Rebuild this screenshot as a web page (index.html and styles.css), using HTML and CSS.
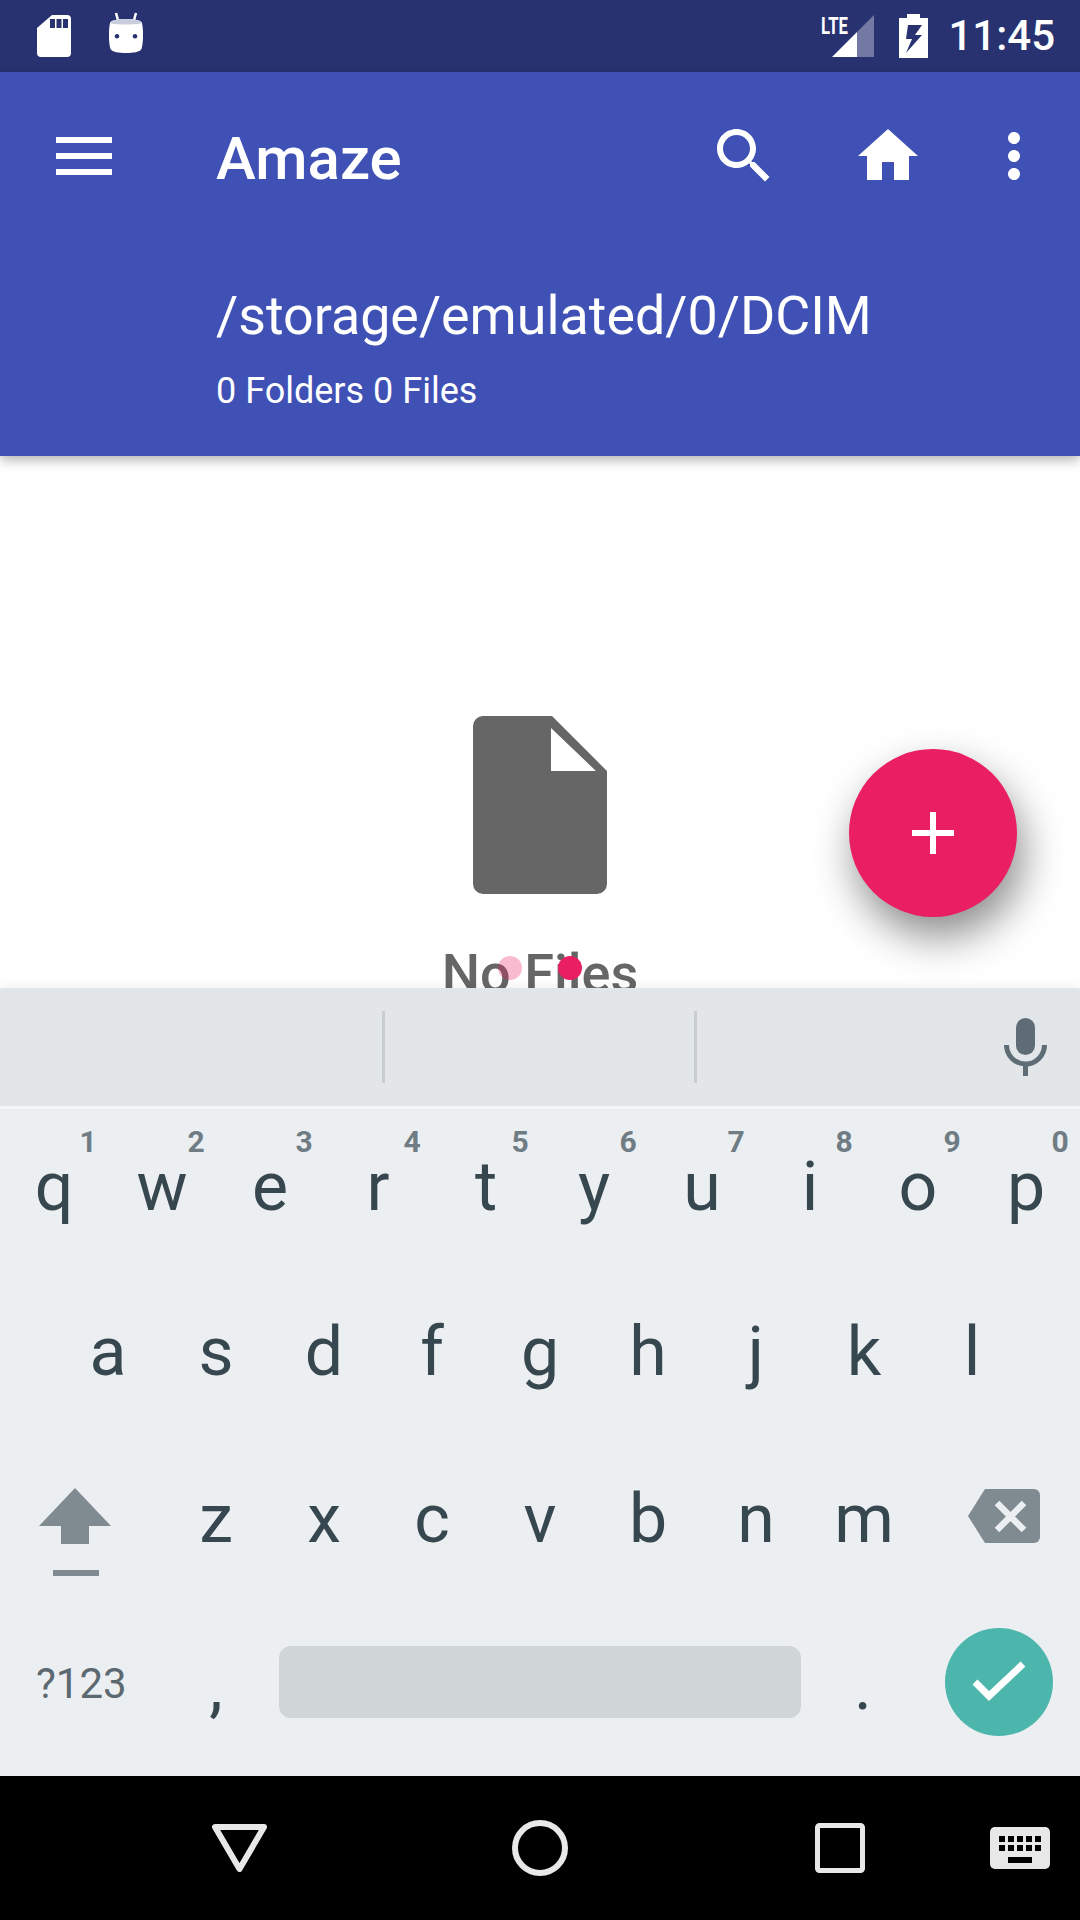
FILE: index.html
```html
<!DOCTYPE html>
<html lang="en">

<head>
  <meta charset="UTF-8">
  <meta name="viewport" content="width=device-width, initial-scale=1.0">
  <title>Amaze</title>
  <link rel="stylesheet" href="styles.css">
</head>

<body>
  <!-- Status bar -->
  <div class="status-bar">
    <svg class="icon-sd" width="34" height="42" viewBox="0 0 34 42">
      <path fill-rule="evenodd" fill="#fff" d="M15 0H30a4 4 0 0 1 4 4V38a4 4 0 0 1-4 4H4a4 4 0 0 1-4-4V13ZM13 4V13H18V4ZM19.500 4V13H24.500V4ZM26 4V13H31V4Z" />
    </svg>
    <svg class="icon-bot" width="34" height="42" viewBox="0 0 34 42">
      <path stroke="#fff" stroke-width="2.500" d="M7 1 9.500 10M27 1 24.500 10" />
      <path fill-rule="evenodd" fill="#fff" d="M17 7C25 7 32 8 33 11 34.500 18 34.500 30 32.500 37 31 40 24 41 17 41 10 41 3 40 1.500 37-.5 30-.5 18 1 11 2 8 9 7 17 7ZM8 22a2.300 2.300 0 1 0 .01 0ZM26 22a2.300 2.300 0 1 0 .01 0Z" />
      <path fill="#c9cede" d="M17 7C25 7 32 8 33 11 28 13 6 13 1 11 2 8 9 7 17 7Z" />
    </svg>
    <div class="status-right">
      <svg class="icon-signal" width="53" height="42" viewBox="0 0 53 42">
        <path fill="#fff" fill-opacity=".35" d="M53 0V42H36V17Z" />
        <path fill="#fff" d="M36 17V42H11Z" />
        <text class="lte" x="0" y="19" textLength="27" lengthAdjust="spacingAndGlyphs">LTE</text>
      </svg>
      <svg class="icon-battery" width="29" height="44" viewBox="0 0 29 44">
        <path fill-rule="evenodd" fill="#fff" d="M8 0H21V4H29V44H0V4H8ZM9 11H23L16 21H23L7 39 13 25H7Z" />
      </svg>
      <span class="clock">11:45</span>
    </div>
  </div>

  <!-- Toolbar -->
  <div class="toolbar">
    <div class="toolbar-row">
      <svg class="icon-menu" width="56" height="38" viewBox="0 0 56 38">
        <path fill="#fff" d="M0 0H56V6H0ZM0 16H56V22H0ZM0 32H56V38H0Z" />
      </svg>
      <div class="title">Amaze</div>
      <svg class="action-search" width="72" height="72" viewBox="0 0 24 24">
        <path fill="#fff" d="M15.500 14h-.79l-.28-.27C15.410 12.590 16 11.110 16 9.500 16 5.910 13.090 3 9.500 3S3 5.910 3 9.500 5.910 16 9.500 16c1.610 0 3.090-.59 4.230-1.570l.27.28v.79l5 4.990L20.490 19l-4.990-5zm-6 0C7.010 14 5 11.990 5 9.500S7.010 5 9.500 5 14 7.010 14 9.500 11.990 14 9.500 14z" />
      </svg>
      <svg class="action-home" width="72" height="72" viewBox="0 0 24 24">
        <path fill="#fff" d="M10 20v-6h4v6h5v-8h3L12 3 2 12h3v8z" />
      </svg>
      <svg class="action-more" width="72" height="72" viewBox="0 0 24 24">
        <path fill="#fff" d="M12 8c1.100 0 2-.9 2-2s-.9-2-2-2-2 .9-2 2 .9 2 2 2zm0 2c-1.100 0-2 .9-2 2s.9 2 2 2 2-.9 2-2-.9-2-2-2zm0 6c-1.100 0-2 .9-2 2s.9 2 2 2 2-.9 2-2-.9-2-2-2z" />
      </svg>
    </div>
    <div class="path">/storage/emulated/0/DCIM</div>
    <div class="counts">0 Folders 0 Files</div>
  </div>

  <!-- Empty folder -->
  <div class="content">
    <svg class="empty-icon" width="134" height="178" viewBox="0 0 134 178">
      <path fill-rule="evenodd" fill="#666" d="M10 0H79L134 55V168a10 10 0 0 1-10 10H10A10 10 0 0 1 0 168V10A10 10 0 0 1 10 0ZM78 12V55H123Z" />
    </svg>
    <div class="empty-text">No Files</div>
    <div class="dot dot-pink"></div>
    <div class="dot dot-red"></div>
    <div class="fab">
      <svg width="42" height="42" viewBox="0 0 42 42">
        <path fill="#fff" d="M18 0H24V18H42V24H24V42H18V24H0V18H18Z" />
      </svg>
    </div>
  </div>

  <!-- Keyboard -->
  <div class="keyboard">
    <div class="suggestions">
      <div class="divider divider-1"></div>
      <div class="divider divider-2"></div>
      <svg class="icon-mic" width="44" height="58" viewBox="0 0 44 58">
        <rect x="12" y="0" width="19" height="37" rx="9.500" fill="#5e6c75" />
        <path d="M2.500 27a19 19 0 0 0 38 0" fill="none" stroke="#5e6c75" stroke-width="5" />
        <rect x="19" y="46" width="5" height="12" fill="#5e6c75" />
      </svg>
    </div>
    <div class="keys">
      <div class="row row-top">
        <div class="key">q<span class="hint">1</span></div>
        <div class="key">w<span class="hint">2</span></div>
        <div class="key">e<span class="hint">3</span></div>
        <div class="key">r<span class="hint">4</span></div>
        <div class="key">t<span class="hint">5</span></div>
        <div class="key">y<span class="hint">6</span></div>
        <div class="key">u<span class="hint">7</span></div>
        <div class="key">i<span class="hint">8</span></div>
        <div class="key">o<span class="hint">9</span></div>
        <div class="key">p<span class="hint">0</span></div>
      </div>
      <div class="row row-home">
        <div class="key">a</div>
        <div class="key">s</div>
        <div class="key">d</div>
        <div class="key">f</div>
        <div class="key">g</div>
        <div class="key">h</div>
        <div class="key">j</div>
        <div class="key">k</div>
        <div class="key">l</div>
      </div>
      <div class="row">
        <div class="key-wide key-shift">
          <svg width="72" height="88" viewBox="0 0 72 88">
            <path fill="#7f8b90" d="M36 0 72 38H50V56H22V38H0ZM14 82H60V88H14Z" />
          </svg>
        </div>
        <div class="key">z</div>
        <div class="key">x</div>
        <div class="key">c</div>
        <div class="key">v</div>
        <div class="key">b</div>
        <div class="key">n</div>
        <div class="key">m</div>
        <div class="key-wide key-delete">
          <svg width="72" height="54" viewBox="0 0 72 54">
            <path fill="#7f8b90" d="M17 0H66a6 6 0 0 1 6 6V48a6 6 0 0 1-6 6H17L0 27Z" />
            <path stroke="#eceff1" stroke-width="6.500" d="M29 14 56 41M56 14 29 41" />
          </svg>
        </div>
      </div>
      <div class="row row-bottom">
        <div class="key-wide key-sym">?123</div>
        <div class="key">,</div>
        <div class="space-bar"></div>
        <div class="key key-period">.</div>
        <div class="enter">
          <svg width="108" height="108" viewBox="0 0 108 108">
            <path fill="none" stroke="#fff" stroke-width="7" d="M30 54 44 68 78 36" />
          </svg>
        </div>
      </div>
    </div>
  </div>

  <!-- Navigation bar -->
  <div class="nav-bar">
    <svg class="nav-back" width="55" height="48" viewBox="0 0 55 48">
      <path fill="none" stroke="#e8e8e8" stroke-width="6" stroke-linejoin="round" d="M3 3H52L27.500 45Z" />
    </svg>
    <svg class="nav-home" width="56" height="56" viewBox="0 0 56 56">
      <circle cx="28" cy="28" r="25" fill="none" stroke="#e8e8e8" stroke-width="6" />
    </svg>
    <svg class="nav-recent" width="50" height="50" viewBox="0 0 50 50">
      <rect x="2.500" y="2.500" width="45" height="45" rx="2" fill="none" stroke="#e8e8e8" stroke-width="5" />
    </svg>
    <svg class="nav-keyboard" width="60" height="42" viewBox="0 0 60 42">
      <rect width="60" height="42" rx="5" fill="#e8e8e8" />
      <path fill="#000" d="M9 9h6v6H9zM18 9h6v6h-6zM27 9h6v6h-6zM36 9h6v6h-6zM45 9h6v6h-6zM9 18h6v6H9zM18 18h6v6h-6zM27 18h6v6h-6zM36 18h6v6h-6zM45 18h6v6h-6zM18 30h24v6H18z" />
    </svg>
  </div>
</body>

</html>
```

FILE: styles.css
```css
body {
  display: flex;
  flex-direction: column;
  width: 1080px;
  height: 1920px;
  margin: 0;
  overflow: hidden;
  background-color: #fff;
  font-family: Roboto, "Noto Sans", sans-serif;
}

svg {
  display: block;
  flex-shrink: 0;
}

/* Status bar */
.status-bar {
  display: flex;
  align-items: flex-start;
  box-sizing: border-box;
  height: 72px;
  padding-top: 15px;
  background-color: #283270;
}

.icon-sd {
  margin-left: 37px;
}

.icon-bot {
  margin-top: -3px;
  margin-left: 38px;
}

.status-right {
  display: flex;
  align-items: flex-start;
  margin-left: auto;
  margin-right: 25px;
}

.lte {
  font-size: 24px;
  font-weight: 700;
  fill: #fff;
}

.icon-battery {
  margin-top: -1px;
  margin-left: 25px;
}

.clock {
  margin-left: 20px;
  font-size: 42px;
  font-weight: 500;
  line-height: 42px;
  color: #fff;
}

/* Toolbar */
.toolbar {
  position: relative;
  z-index: 2;
  box-sizing: border-box;
  height: 384px;
  padding-top: 48px;
  background-color: #3f51b5;
  box-shadow: 0 4px 11px rgba(0, 0, 0, 0.3);
  color: #fff;
}

.toolbar-row {
  display: flex;
  align-items: center;
  height: 72px;
}

.icon-menu {
  margin-left: 56px;
}

.title {
  margin-top: 4px;
  margin-left: 104px;
  font-size: 60px;
  font-weight: 500;
}

.action-search {
  margin-left: auto;
}

.action-home {
  margin-left: 72px;
}

.action-more {
  margin-left: 54px;
  margin-right: 30px;
}

.path {
  margin-top: 92px;
  margin-left: 216px;
  font-size: 53.800px;
  line-height: 64px;
}

.counts {
  margin-top: 21px;
  margin-left: 216px;
  font-size: 36px;
  line-height: 44px;
}

/* Empty folder */
.content {
  position: relative;
  display: flex;
  flex: 1;
  flex-direction: column;
  align-items: center;
  padding-top: 260px;
  overflow: hidden;
}

.empty-text {
  margin-top: 48px;
  font-size: 54px;
  font-weight: 500;
  line-height: 64px;
  white-space: nowrap;
  color: #666;
}

.dot {
  position: absolute;
  top: 500px;
  width: 24px;
  height: 24px;
  border-radius: 50%;
}

.dot-pink {
  left: 498px;
  background-color: rgba(233, 30, 99, 0.3);
}

.dot-red {
  left: 558px;
  background-color: #e91e63;
}

.fab {
  position: absolute;
  top: 293px;
  left: 849px;
  display: flex;
  justify-content: center;
  align-items: center;
  width: 168px;
  height: 168px;
  border-radius: 50%;
  background-color: #e91e63;
  box-shadow: 6px 20px 42px rgba(0, 0, 0, 0.45);
}

/* Keyboard */
.keyboard {
  position: relative;
  z-index: 1;
  background-color: #eceff1;
  box-shadow: 0 -3px 10px rgba(0, 0, 0, 0.05);
}

.suggestions {
  display: flex;
  align-items: center;
  box-sizing: border-box;
  height: 118px;
  background-color: #e2e6e9;
}

.divider {
  width: 3px;
  height: 72px;
  background-color: #c8cdd0;
}

.divider-1 {
  margin-left: 382px;
}

.divider-2 {
  margin-left: 309px;
}

.icon-mic {
  margin-left: 307px;
}

.keys {
  box-sizing: border-box;
  height: 670px;
  border-top: 3px solid #f3f5f6;
}

.row {
  display: flex;
  height: 167px;
}

.row-bottom {
  height: 166px;
}

.row-top .key {
  padding-top: 2px;
}

.row-home {
  padding-left: 54px;
}

.key {
  position: relative;
  box-sizing: border-box;
  width: 108px;
  font-size: 68px;
  line-height: 153px;
  text-align: center;
  color: #37474f;
}

.hint {
  position: absolute;
  top: 18px;
  left: 76px;
  width: 24px;
  font-size: 30px;
  font-weight: 700;
  line-height: 30px;
  color: #6f7c84;
}

.key-wide {
  box-sizing: border-box;
  width: 162px;
}

.key-shift {
  padding-top: 45px;
  padding-left: 39px;
}

.key-delete {
  padding-top: 46px;
  padding-left: 50px;
}

.key-sym {
  padding-left: 36px;
  font-size: 42px;
  line-height: 147px;
  color: #5c6970;
}

.space-bar {
  width: 522px;
  height: 72px;
  margin-top: 36px;
  margin-left: 9px;
  border-radius: 12px;
  background-color: #d0d5d8;
}

.key-period {
  margin-left: 8px;
}

.enter {
  width: 108px;
  height: 108px;
  margin-top: 18px;
  margin-left: 28px;
  border-radius: 50%;
  background-color: #4db6ac;
}

/* Navigation bar */
.nav-bar {
  display: flex;
  align-items: center;
  height: 144px;
  padding-left: 212px;
  background-color: #000;
}

.nav-home {
  margin-left: 245px;
}

.nav-recent {
  margin-left: 247px;
}

.nav-keyboard {
  margin-left: 125px;
}
```
